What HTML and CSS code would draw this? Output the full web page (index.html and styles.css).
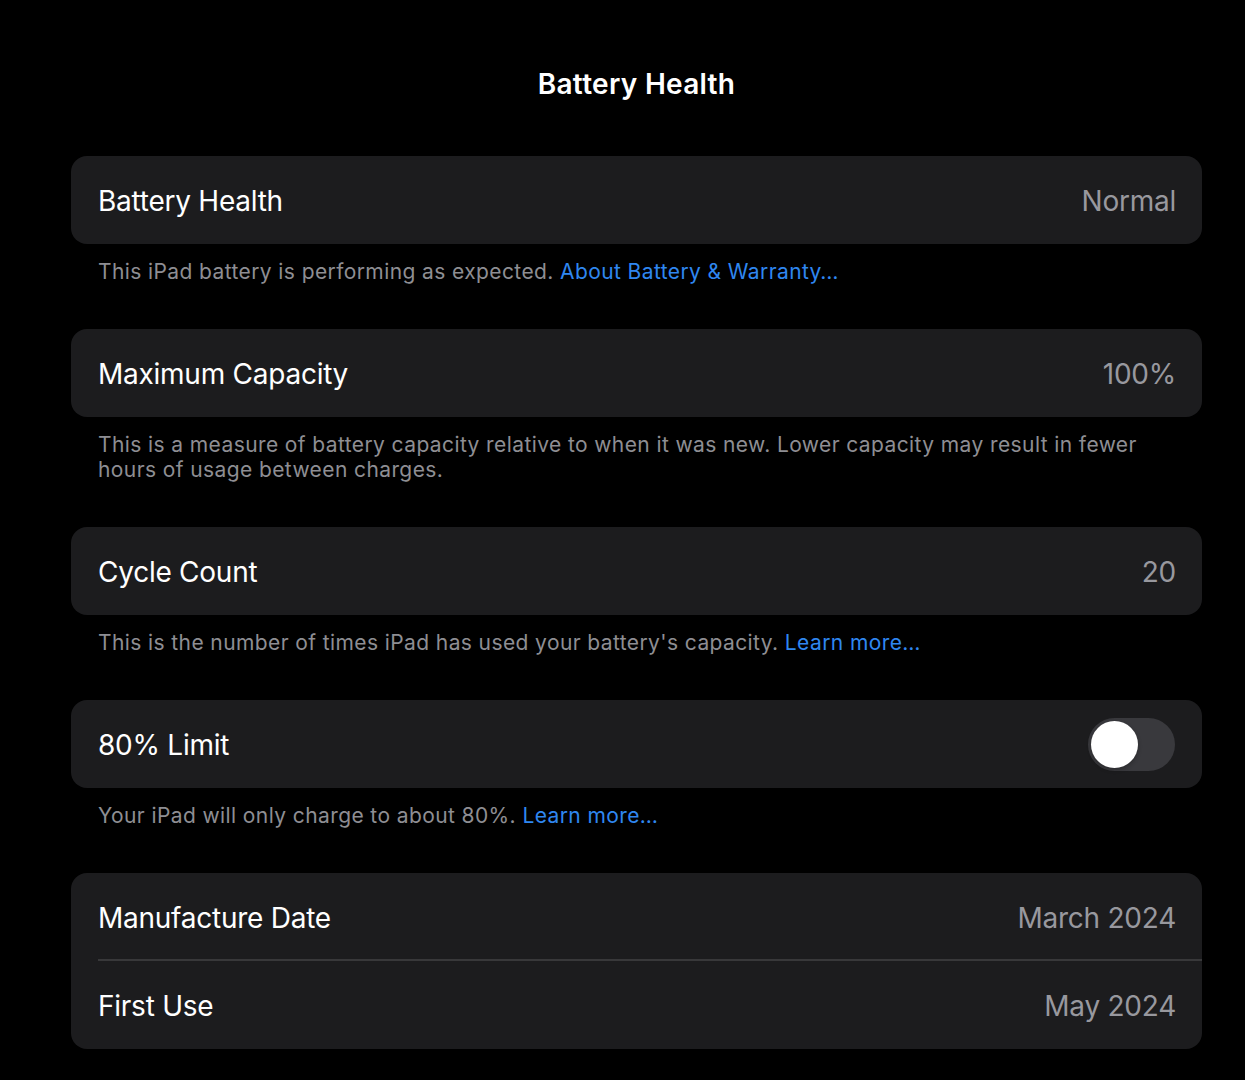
FILE: index.html
```html
<!DOCTYPE html>
<html lang="en">
<head>
<meta charset="utf-8">
<title>Battery Health</title>
<link rel="stylesheet" href="styles.css">
</head>
<body>
<div class="page">
  <h1 class="title">Battery Health</h1>
  <div class="group">
    <div class="card">
      <div class="row"><span class="label">Battery Health</span><span class="value">Normal</span></div>
    </div>
    <p class="footer">This iPad battery is performing as expected. <a class="link">About Battery &amp; Warranty…</a></p>
  </div>
  <div class="group">
    <div class="card">
      <div class="row"><span class="label">Maximum Capacity</span><span class="value">100%</span></div>
    </div>
    <p class="footer">This is a measure of battery capacity relative to when it was new. Lower capacity may result in fewer hours of usage between charges.</p>
  </div>
  <div class="group">
    <div class="card">
      <div class="row"><span class="label">Cycle Count</span><span class="value">20</span></div>
    </div>
    <p class="footer">This is the number of times iPad has used your battery's capacity. <a class="link">Learn more…</a></p>
  </div>
  <div class="group">
    <div class="card">
      <div class="row"><span class="label">80% Limit</span><span class="toggle"><span class="knob"></span></span></div>
    </div>
    <p class="footer">Your iPad will only charge to about 80%. <a class="link">Learn more…</a></p>
  </div>
  <div class="group">
    <div class="card">
      <div class="row sep"><span class="label">Manufacture Date</span><span class="value">March 2024</span></div>
      <div class="row"><span class="label">First Use</span><span class="value">May 2024</span></div>
    </div>
  </div>
</div>
</body>
</html>
```
FILE: styles.css
```css
html, body {
  margin: 0;
  background: #000;
  color: #fff;
  font-family: Inter, "Noto Sans", "Liberation Sans", sans-serif;
}
.page {
  padding: 0 43px 0 71px;
  display: flex;
  flex-direction: column;
}
.title {
  margin: 0;
  height: 156px;
  display: flex;
  align-items: center;
  justify-content: center;
  box-sizing: border-box;
  font-size: 28px;
  font-weight: 600;
  letter-spacing: 0.3px;
  line-height: 1;
  padding: 24px 0 12px;
}
.card {
  background: #1c1c1e;
  border-radius: 16px;
  overflow: hidden;
}
.row {
  box-sizing: border-box;
  height: 88px;
  display: flex;
  align-items: center;
  justify-content: space-between;
  padding: 1px 27px 0;
  font-size: 28px;
  letter-spacing: -0.25px;
  position: relative;
}
.row.sep::after {
  content: "";
  position: absolute;
  left: 27px;
  right: 0;
  bottom: 0;
  height: 2px;
  background: #38383a;
}
.value {
  color: #98989e;
  margin-right: -1px;
}
.footer {
  margin: 0;
  padding: 15px 27px 45px;
  font-size: 21px;
  line-height: 25px;
  color: #8e8e93;
  letter-spacing: 0.4px;
}
.link {
  color: #2f87f0;
}
.toggle {
  width: 87px;
  height: 53px;
  border-radius: 27px;
  background: #39393d;
  position: relative;
  display: block;
}
.knob {
  position: absolute;
  left: 3px;
  top: 3px;
  width: 47px;
  height: 47px;
  border-radius: 50%;
  background: #fff;
  box-shadow: 0 2px 4px rgba(0,0,0,0.25);
}
```
